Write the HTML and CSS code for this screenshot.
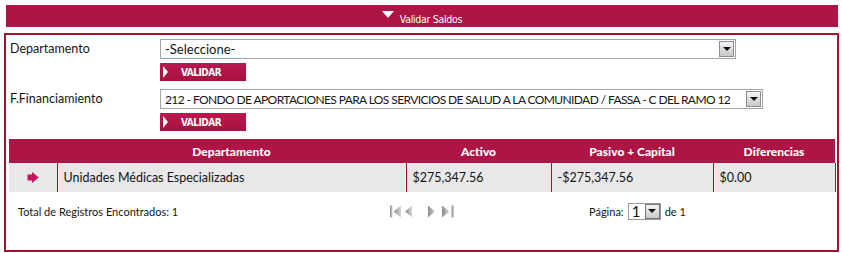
FILE: index.html
```html
<!DOCTYPE html>
<html lang="es">
<head>
    <meta charset="UTF-8">
    <title>Validar Saldos</title>
    <link rel="stylesheet" href="styles.css">
</head>
<body>

    <!-- Barra plegable -->
    <div class="toggle-bar">
        <span class="caret"></span>
        <span class="toggle-title">Validar Saldos</span>
    </div>

    <div class="panel">

        <!-- Filtros -->
        <div class="filters">
            <label class="filter-label">Departamento</label>
            <div class="field">
                <div class="combo combo-dep">
                    <select><option>-Seleccione-</option></select>
                    <span class="combo-btn"><i></i></span>
                </div>
                <button class="btn-validar">VALIDAR</button>
            </div>

            <label class="filter-label">F.Financiamiento</label>
            <div class="field">
                <div class="combo combo-fin">
                    <select><option>212 - FONDO DE APORTACIONES PARA LOS SERVICIOS DE SALUD A LA COMUNIDAD / FASSA - C DEL RAMO 12</option></select>
                    <span class="combo-btn"><i></i></span>
                </div>
                <button class="btn-validar">VALIDAR</button>
            </div>
        </div>

        <!-- Resultados -->
        <table class="grid">
            <colgroup>
                <col style="width:48px">
                <col style="width:349px">
                <col style="width:145px">
                <col style="width:162px">
                <col style="width:122px">
            </colgroup>
            <thead>
                <tr>
                    <th></th>
                    <th>Departamento</th>
                    <th>Activo</th>
                    <th>Pasivo + Capital</th>
                    <th>Diferencias</th>
                </tr>
            </thead>
            <tbody>
                <tr>
                    <td class="sel">
                        <svg width="12" height="11" viewBox="0 0 12 11"><path d="M0.5 2.5H5V0L11.8 5.5L5 11V8.5H0.5Z" fill="#c8145a"/></svg>
                    </td>
                    <td>Unidades Médicas Especializadas</td>
                    <td>$275,347.56</td>
                    <td>-$275,347.56</td>
                    <td>$0.00</td>
                </tr>
            </tbody>
        </table>

        <!-- Paginador -->
        <div class="pager">
            <span class="total">Total de Registros Encontrados: 1</span>
            <svg class="nav" width="66" height="13" viewBox="0 0 66 13">
                <defs>
                    <linearGradient id="g" x1="0" y1="0" x2="1" y2="0">
                        <stop offset="0" stop-color="#8a8a8a"/>
                        <stop offset="1" stop-color="#d6d6d6"/>
                    </linearGradient>
                </defs>
                <rect x="0" y="0.5" width="2.5" height="12" fill="url(#g)"/>
                <path d="M11 0.5V12.5L3.5 6.5Z" fill="url(#g)"/>
                <path d="M22 0.5V12.5L15 6.5Z" fill="url(#g)"/>
                <path d="M38 0.5V12.5L45 6.5Z" fill="url(#g)"/>
                <path d="M52 0.5V12.5L59.5 6.5Z" fill="url(#g)"/>
                <rect x="61.5" y="0.5" width="2.5" height="12" fill="url(#g)"/>
            </svg>
            <span class="page">
                Página:
                <span class="combo combo-page">
                    <span class="page-num">1</span>
                    <span class="combo-btn"><i></i></span>
                </span>
                de 1
            </span>
        </div>

    </div>

</body>
</html>
```

FILE: styles.css
```css
body {
    margin: 0;
    font-family: 'Lato', 'Liberation Sans', sans-serif;
    font-size: 12.5px;
    color: #151515;
    background: #fff;
}

/* Barra superior */
.toggle-bar {
    margin: 5px 4px 0 6px;
    height: 22px;
    background: #ae1444;
    display: flex;
    justify-content: center;
    color: #fff;
}

.caret {
    margin: 6px 6px 0 0;
    width: 0;
    height: 0;
    border-left: 6px solid transparent;
    border-right: 6px solid transparent;
    border-top: 7px solid #fff;
}

.toggle-title {
    padding-top: 8px;
    font-family: 'DejaVu Sans Condensed', 'DejaVu Sans', sans-serif;
    font-stretch: condensed;
    font-size: 10.5px;
    letter-spacing: -0.3px;
    line-height: 13px;
}

/* Panel */
.panel {
    margin: 6px 3px 0 4px;
    height: 215px;
    border: 2px solid #a3132f;
}

.filters {
    display: grid;
    grid-template-columns: 150px auto;
    row-gap: 8px;
    padding: 4px 0 0 4px;
}

.filter-label {
    line-height: 20px;
}

.field {
    display: flex;
    flex-direction: column;
    align-items: flex-start;
    gap: 4px;
}

/* Combos */
.combo {
    display: flex;
    align-items: center;
    height: 20px;
    box-sizing: border-box;
    border: 1px solid #a5a5a5;
    background: #fff;
}

.combo select {
    flex: 1;
    min-width: 0;
    height: 100%;
    padding: 0 4px;
    border: 0;
    outline: 0;
    background: transparent;
    font-family: inherit;
    font-size: 13px;
    color: #151515;
    -webkit-appearance: none;
    appearance: none;
}

.combo-dep {
    width: 576px;
}

.combo-fin {
    width: 603px;
}

.combo-fin select {
    font-size: 12px;
    letter-spacing: -0.6px;
}

.combo-btn {
    width: 15px;
    height: 16px;
    margin-right: 1px;
    box-sizing: border-box;
    border: 1px solid #8d8d8d;
    background: linear-gradient(#f4f4f4, #c9c9c9);
    display: flex;
    align-items: center;
    justify-content: center;
}

.combo-btn i {
    width: 0;
    height: 0;
    border-left: 4px solid transparent;
    border-right: 4px solid transparent;
    border-top: 4px solid #111;
}

/* Botón validar */
.btn-validar {
    width: 86px;
    height: 18px;
    padding: 0 0 0 21px;
    border: 0;
    background: linear-gradient(#b8194f, #a8123f);
    color: #fff;
    font-family: 'DejaVu Sans Condensed', 'DejaVu Sans', sans-serif;
    font-stretch: condensed;
    font-weight: bold;
    font-size: 10px;
    letter-spacing: -0.5px;
    text-align: left;
    position: relative;
}

.btn-validar::before {
    content: '';
    position: absolute;
    left: 3px;
    top: 3px;
    border-top: 6px solid transparent;
    border-bottom: 6px solid transparent;
    border-left: 5px solid #fff;
}

/* Tabla */
.grid {
    margin: 8px 0 0 3px;
    width: 826px;
    border-collapse: collapse;
    table-layout: fixed;
}

.grid th {
    height: 24px;
    padding: 0;
    background: #ae1444;
    color: #fff;
    font-size: 12px;
    font-weight: 900;
    text-align: center;
}

.grid td {
    height: 29px;
    padding: 0 6px;
    background: #e8e8e8;
    border-left: 1px solid #a3132f;
    white-space: nowrap;
}

.grid td:first-child {
    border-left: 0;
}

.grid td:last-child {
    border-right: 1px solid #a3132f;
}

.grid td.sel {
    text-align: center;
    padding: 0;
}

.grid td.sel svg {
    display: block;
    margin: 0 auto;
}

/* Paginador */
.pager {
    display: grid;
    grid-template-columns: 372px 199px auto;
    align-items: center;
    height: 20px;
    margin-top: 9px;
    padding-left: 12px;
    font-size: 11px;
}

.nav {
    display: block;
}

.page {
    display: flex;
    align-items: center;
    gap: 4px;
}

.combo-page {
    width: 33px;
    height: 17px;
    border-color: #9a9a9a;
}

.page-num {
    flex: 1;
    padding-left: 3px;
    font-size: 15px;
    line-height: 15px;
}

.combo-page .combo-btn {
    width: 15px;
    height: 15px;
    margin: 0;
    border-color: #777;
}
```
